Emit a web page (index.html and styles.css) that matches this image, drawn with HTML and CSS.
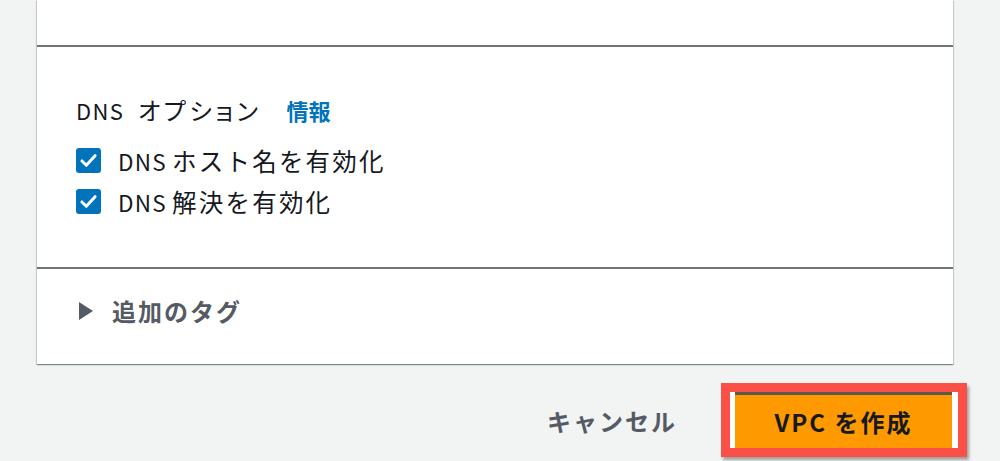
FILE: index.html
```html
<!DOCTYPE html>
<html lang="ja">
<head>
<meta charset="utf-8">
<link rel="stylesheet" href="styles.css">
</head>
<body>
<div class="page">
  <div class="card">
    <div class="section top"></div>
    <div class="section dns">
      <div class="heading"><span class="latin">DNS</span><span class="ja kana">オプション</span><a class="info">情報</a></div>
      <label class="check"><span class="box"><svg viewBox="0 0 24 24" width="21" height="21"><path d="M4.5 12.5l5 5L19.5 6.5" fill="none" stroke="#fff" stroke-width="3.4" stroke-linecap="round" stroke-linejoin="round"/></svg></span><span class="label"><span class="latin">DNS</span> <span class="ja">ホスト名を有効化</span></span></label>
      <label class="check"><span class="box"><svg viewBox="0 0 24 24" width="21" height="21"><path d="M4.5 12.5l5 5L19.5 6.5" fill="none" stroke="#fff" stroke-width="3.4" stroke-linecap="round" stroke-linejoin="round"/></svg></span><span class="label"><span class="latin">DNS</span> <span class="ja">解決を有効化</span></span></label>
    </div>
    <div class="section tags">
      <span class="caret"></span><span class="tagtitle">追加のタグ</span>
    </div>
  </div>
  <div class="footer">
    <span class="cancel">キャンセル</span>
    <span class="highlight"><span class="primary">VPC を作成</span></span>
  </div>
</div>
</body>
</html>
```
FILE: styles.css
```css
html, body {
  margin: 0;
  padding: 0;
  background: #f2f3f3;
  font-family: "Noto Sans CJK JP", "Liberation Sans", sans-serif;
  color: #16191f;
}
.page {
  width: 1000px;
  height: 461px;
  overflow: hidden;
}
.card {
  margin-left: 37px;
  width: 916px;
  background: #fff;
  box-shadow: 0 1px 1px 0 rgba(0,28,36,.3), 1px 1px 1px 0 rgba(0,28,36,.15), -1px 1px 1px 0 rgba(0,28,36,.15);
}
.section.top {
  height: 45px;
}
.section.dns {
  border-top: 2px solid #6f7478;
  height: 222px;
  padding: 50px 0 0 39px;
  box-sizing: border-box;
}
.latin {
  letter-spacing: 1.3px;
}
.ja {
  font-size: 24.5px;
  letter-spacing: 2.2px;
}
.heading {
  display: flex;
  align-items: baseline;
  font-size: 22px;
  line-height: 26px;
  height: 26px;
}
.heading .kana {
  margin-left: 14px;
  font-size: 24px;
  font-feature-settings: "palt";
  letter-spacing: 3.6px;
}
.info {
  color: #0073bb;
  font-weight: bold;
  margin-left: 25px;
  font-size: 22px;
}
.check {
  display: flex;
  align-items: center;
  gap: 17px;
  height: 41px;
  font-size: 22.5px;
}
.check:first-of-type { margin-top: 17px; }
.label {
  line-height: 30px;
}
.box {
  width: 25px;
  height: 25px;
  border-radius: 3px;
  background: #0073bb;
  display: flex;
  align-items: center;
  justify-content: center;
  flex: none;
}
.section.tags {
  border-top: 2px solid #6f7478;
  height: 97px;
  display: flex;
  align-items: center;
  padding-left: 42px;
  padding-bottom: 12px;
  box-sizing: border-box;
}
.caret {
  width: 0;
  height: 0;
  border-top: 9px solid transparent;
  border-bottom: 9px solid transparent;
  border-left: 14px solid #545b64;
  margin-right: 19px;
}
.tagtitle {
  font-weight: bold;
  font-size: 24px;
  color: #545b64;
  letter-spacing: 2px;
}
.footer {
  display: flex;
  justify-content: flex-end;
  align-items: center;
  margin-top: 19px;
  padding-right: 33px;
}
.cancel {
  font-weight: bold;
  font-size: 24px;
  color: #545b64;
  letter-spacing: 2px;
  margin-right: 44px;
}
.highlight {
  display: flex;
  border: 9px solid #fa5048;
  background: #fff;
  padding: 0 6px 0 5px;
  box-shadow: 2px 3px 3px rgba(0,0,0,.35);
}
.primary {
  display: flex;
  align-items: center;
  justify-content: center;
  width: 217px;
  height: 56px;
  box-sizing: border-box;
  background: #ff9900;
  border-top: 3px solid #5a5a50;
  font-weight: bold;
  font-size: 24px;
  letter-spacing: 2px;
  color: #16191f;
}
```
